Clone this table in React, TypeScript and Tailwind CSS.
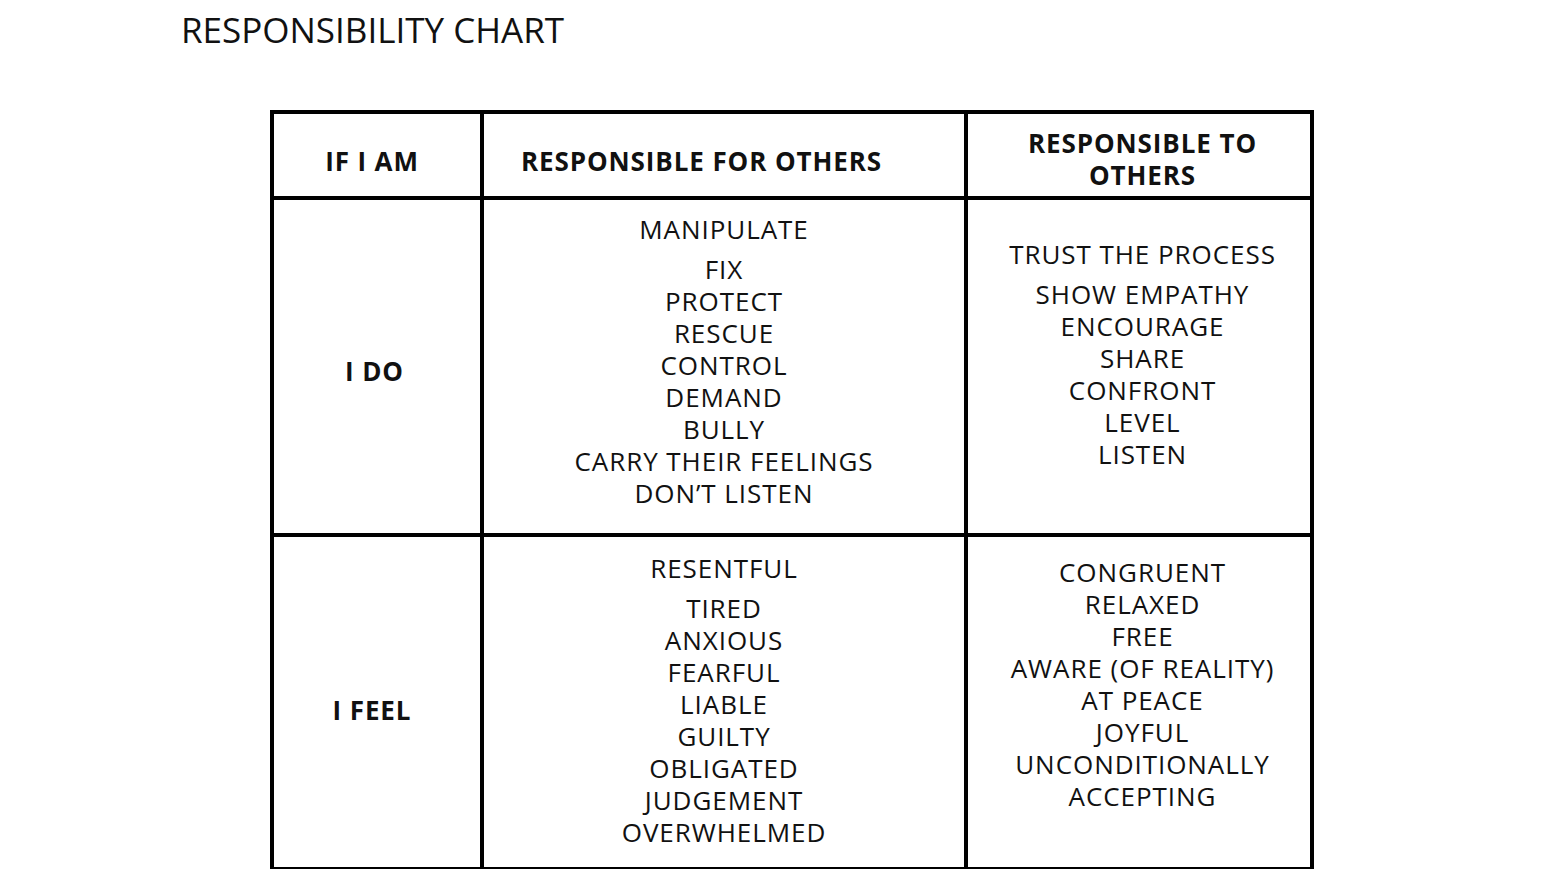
import React from "react";

const font = { fontFamily: '"Open Sans", "Noto Sans", sans-serif' };

function Lines({ first, rest }: { first?: string; rest: string[] }) {
  return (
    <div className="flex flex-col items-center text-[26px] leading-[32px] tracking-[0.95px] text-[#111]">
      {first && <div className="mb-[8px] whitespace-nowrap">{first}</div>}
      {rest.map((t) => (
        <div key={t} className="whitespace-nowrap">{t}</div>
      ))}
    </div>
  );
}

export default function App() {
  return (
    <div className="min-h-screen bg-white" style={font}>
      <h1 className="pl-[181px] pt-[7px] text-[35px] leading-[46px] text-[#111] font-normal">
        RESPONSIBILITY CHART
      </h1>
      <div className="ml-[270px] mt-[57px] w-[1044px] border-4 border-black grid grid-cols-[210px_484px_1fr] grid-rows-[86px_337px_330px]">
        {/* header */}
        <div className="border-r-4 border-b-4 border-black pt-[31px] pr-[10px] text-center text-[26px] leading-[32px] tracking-[0.9px] font-bold text-[#111]">
          IF I AM
        </div>
        <div className="border-r-4 border-b-4 border-black pt-[31px] pl-[37px] text-[26px] leading-[32px] tracking-[0.9px] font-bold text-[#111] whitespace-nowrap">
          RESPONSIBLE FOR OTHERS
        </div>
        <div className="border-b-4 border-black pt-[13px] pl-[7px] text-center text-[26px] leading-[32px] tracking-[0.9px] font-bold text-[#111]">
          RESPONSIBLE TO
          <br />
          OTHERS
        </div>

        {/* row 1 */}
        <div className="border-r-4 border-b-4 border-black pt-[155px] pr-[5px] text-center text-[26px] leading-[32px] tracking-[0.9px] font-bold text-[#111]">
          I DO
        </div>
        <div className="border-r-4 border-b-4 border-black pt-[13px]">
          <Lines
            first="MANIPULATE"
            rest={["FIX", "PROTECT", "RESCUE", "CONTROL", "DEMAND", "BULLY", "CARRY THEIR FEELINGS", "DON\u2019T LISTEN"]}
          />
        </div>
        <div className="border-b-4 border-black pt-[38px] pl-[7px]">
          <Lines
            first="TRUST THE PROCESS"
            rest={["SHOW EMPATHY", "ENCOURAGE", "SHARE", "CONFRONT", "LEVEL", "LISTEN"]}
          />
        </div>

        {/* row 2 */}
        <div className="border-r-4 border-black pt-[157px] pr-[10px] text-center text-[26px] leading-[32px] tracking-[0.9px] font-bold text-[#111]">
          I FEEL
        </div>
        <div className="border-r-4 border-black pt-[15px]">
          <Lines
            first="RESENTFUL"
            rest={["TIRED", "ANXIOUS", "FEARFUL", "LIABLE", "GUILTY", "OBLIGATED", "JUDGEMENT", "OVERWHELMED"]}
          />
        </div>
        <div className="pt-[19px] pl-[7px]">
          <Lines
            rest={["CONGRUENT", "RELAXED", "FREE", "AWARE (OF REALITY)", "AT PEACE", "JOYFUL", "UNCONDITIONALLY", "ACCEPTING"]}
          />
        </div>
      </div>
    </div>
  );
}
